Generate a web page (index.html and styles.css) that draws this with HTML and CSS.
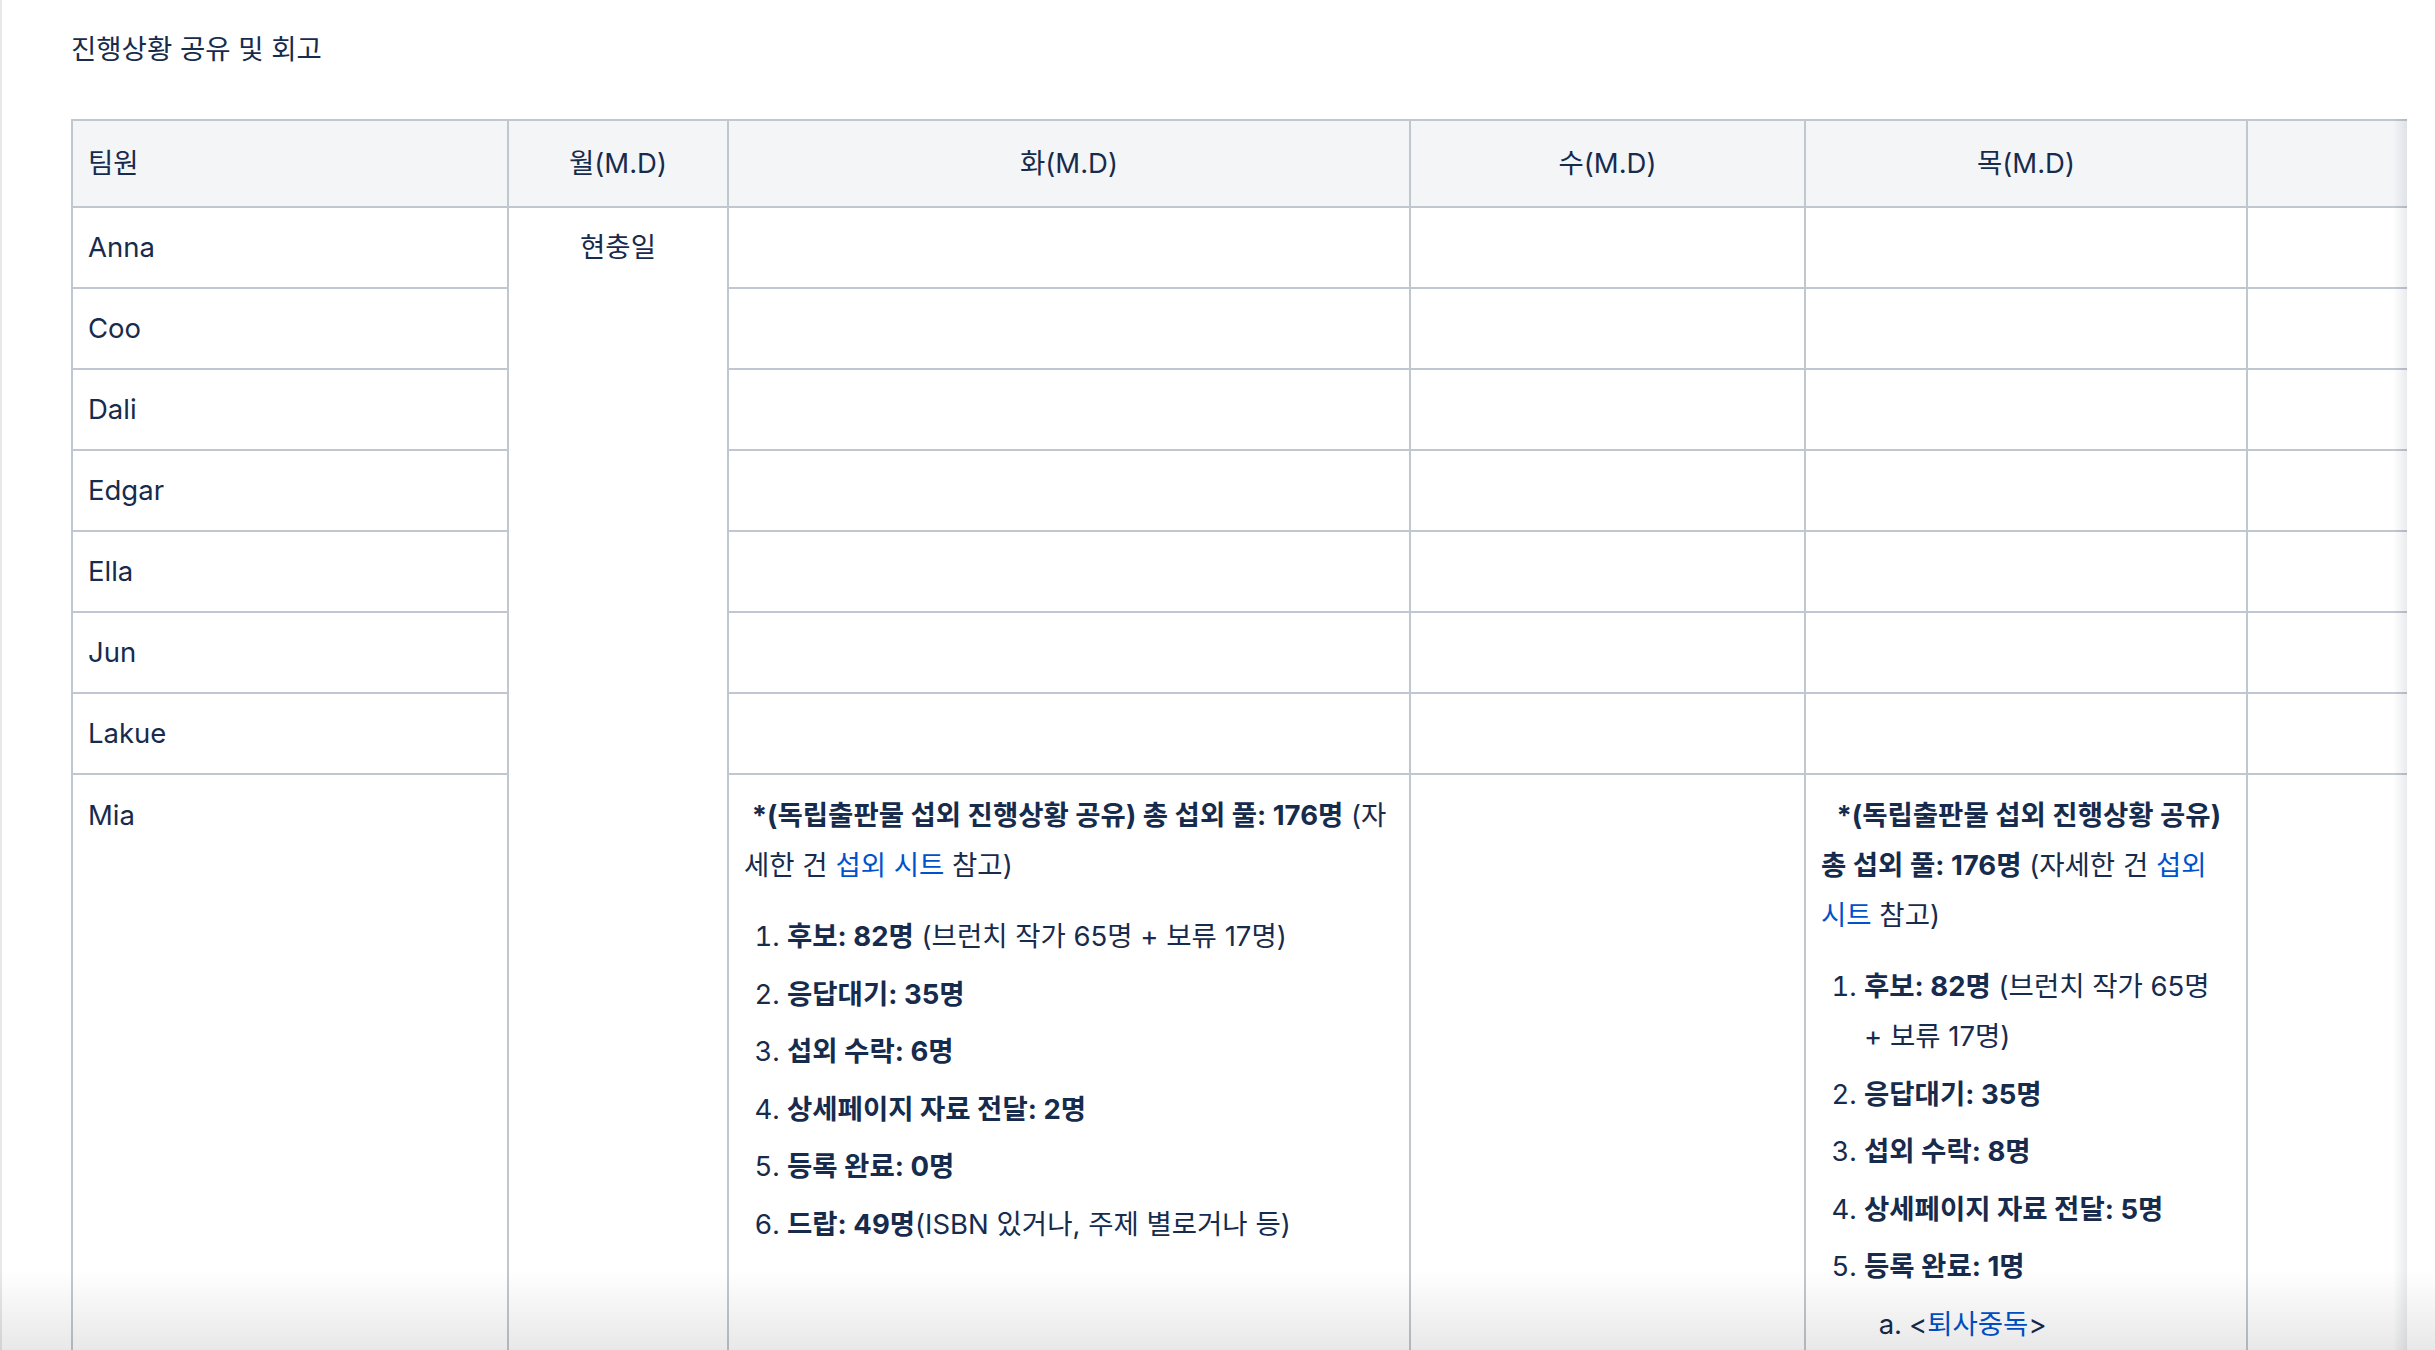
FILE: index.html
```html
<!DOCTYPE html>
<html lang="ko">
<head>
<meta charset="utf-8">
<title>진행상황 공유 및 회고</title>
<link rel="stylesheet" href="styles.css">
</head>
<body>
<main class="page">
  <p class="title">진행상황 공유 및 회고</p>
  <div class="table-wrap">
    <table class="grid">
      <thead>
        <tr>
          <th class="c-name">팀원</th>
          <th class="c-mon center">월(M.D)</th>
          <th class="c-tue center">화(M.D)</th>
          <th class="c-wed center">수(M.D)</th>
          <th class="c-thu center">목(M.D)</th>
          <th class="c-fri center"></th>
        </tr>
      </thead>
      <tbody>
        <tr><td>Anna</td><td rowspan="8" class="center">현충일</td><td></td><td></td><td></td><td></td></tr>
        <tr><td>Coo</td><td></td><td></td><td></td><td></td></tr>
        <tr><td>Dali</td><td></td><td></td><td></td><td></td></tr>
        <tr><td>Edgar</td><td></td><td></td><td></td><td></td></tr>
        <tr><td>Ella</td><td></td><td></td><td></td><td></td></tr>
        <tr><td>Jun</td><td></td><td></td><td></td><td></td></tr>
        <tr><td>Lakue</td><td></td><td></td><td></td><td></td></tr>
        <tr>
          <td class="mia">Mia</td>
          <td class="mia">
            <p>&nbsp;<strong>*(독립출판물 섭외 진행상황 공유) 총 섭외 풀: 176명</strong> (자세한 건 <a href="#">섭외 시트</a> 참고)</p>
            <ol>
              <li><strong>후보: 82명</strong> (브런치 작가 65명 + 보류 17명)</li>
              <li><strong>응답대기: 35명</strong></li>
              <li><strong>섭외 수락: 6명</strong></li>
              <li><strong>상세페이지 자료 전달: 2명</strong></li>
              <li><strong>등록 완료: 0명</strong></li>
              <li><strong>드랍: 49명</strong>(ISBN 있거나, 주제 별로거나 등)</li>
            </ol>
          </td>
          <td class="mia"></td>
          <td class="mia">
            <p>&nbsp;&nbsp;<strong>*(독립출판물 섭외 진행상황 공유) 총 섭외 풀: 176명</strong> (자세한 건 <a href="#">섭외 시트</a> 참고)</p>
            <ol>
              <li><strong>후보: 82명</strong> (브런치 작가 65명 +&nbsp;보류 17명)</li>
              <li><strong>응답대기: 35명</strong></li>
              <li><strong>섭외 수락: 8명</strong></li>
              <li><strong>상세페이지 자료 전달: 5명</strong></li>
              <li><strong>등록 완료: 1명</strong>
                <ol class="sub">
                  <li>&lt;<a href="#">퇴사중독</a>&gt;</li>
                </ol>
              </li>
            </ol>
          </td>
          <td class="mia"></td>
        </tr>
      </tbody>
    </table>
  </div>
</main>
<div class="fade"></div>
</body>
</html>
```

FILE: styles.css
```css
html, body {
  margin: 0;
  background: #ffffff;
}
html {
  overflow: hidden;
}
body {
  border-left: 2px solid #e8e8e8;
  font-family: Inter, "Noto Sans CJK KR", sans-serif;
  font-size: 27.5px;
  line-height: 50px;
  color: #172b4d;
}
.page {
  padding: 24px 0 0 69px;
}
.title {
  margin: 0 0 44.5px;
}
.table-wrap {
  position: relative;
  width: 2336px;
  overflow: hidden;
}
.table-wrap::after {
  content: "";
  position: absolute;
  top: 0;
  right: 0;
  bottom: 0;
  width: 14px;
  background: linear-gradient(to right, rgba(9, 30, 66, 0), rgba(9, 30, 66, 0.09));
}
.grid {
  border-collapse: separate;
  border-spacing: 0;
  table-layout: fixed;
  width: 2619px;
  border-top: 2px solid #c1c7d0;
  border-left: 2px solid #c1c7d0;
}
.grid th,
.grid td {
  box-sizing: border-box;
  border-right: 2px solid #c1c7d0;
  border-bottom: 2px solid #c1c7d0;
  padding: 14px 15px 15px;
  vertical-align: top;
  text-align: left;
  font-weight: 400;
}
.grid th {
  background: #f4f5f7;
  padding: 17px 15px 18px;
}
.grid td.mia {
  padding-top: 15px;
}
.grid .center {
  text-align: center;
}
.c-name { width: 436px; }
.c-mon { width: 220px; }
.c-tue { width: 682px; }
.c-wed { width: 395px; }
.c-thu { width: 442px; }
.c-fri { width: 442px; }

.grid p {
  margin: 0;
}
.grid strong {
  font-weight: 700;
}
.grid a {
  color: #0052cc;
  text-decoration: none;
}
.grid ol {
  margin: 21.5px 0 0;
  padding-left: 43px;
}
.grid li + li {
  margin-top: 7.5px;
}
.grid ol.sub {
  margin-top: 7.5px;
  padding-left: 45px;
  list-style-type: lower-alpha;
}
.fade {
  position: fixed;
  left: 0;
  right: 0;
  bottom: 0;
  height: 80px;
  background: linear-gradient(to bottom, rgba(0, 0, 0, 0), rgba(0, 0, 0, 0.09));
  pointer-events: none;
}
```
